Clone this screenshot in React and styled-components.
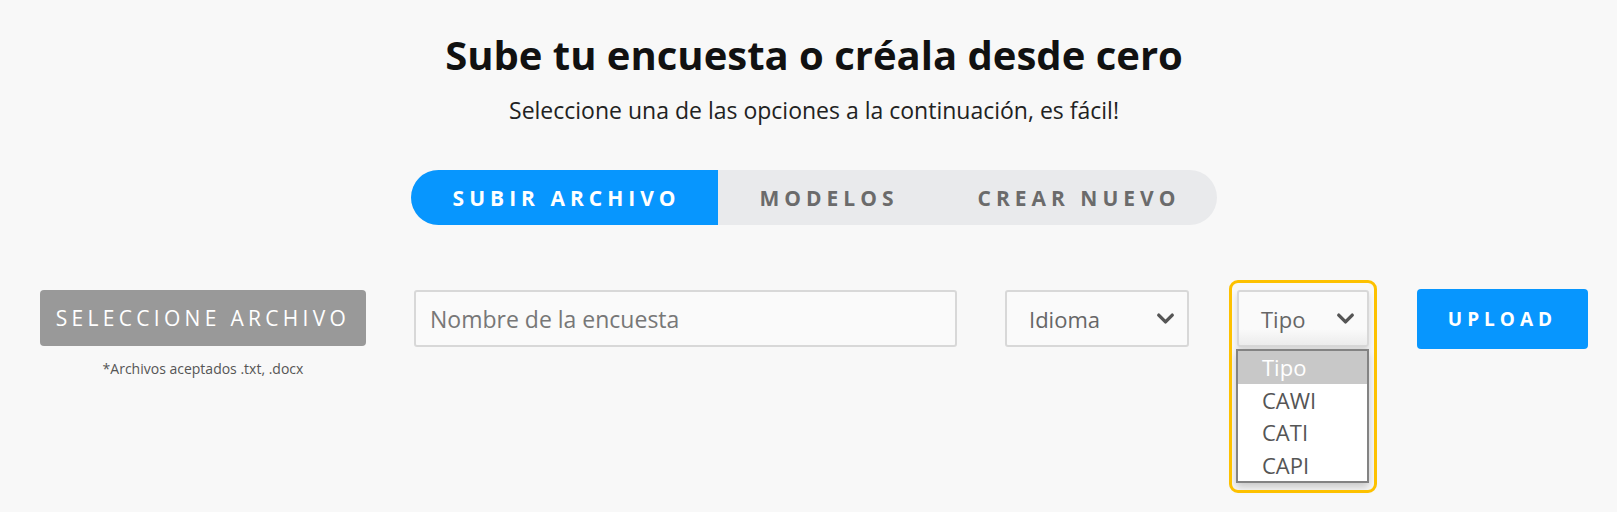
import React from "react";
import styled, { createGlobalStyle } from "styled-components";
import { ChevronDown } from "lucide-react";

const GlobalStyle = createGlobalStyle`
  body {
    margin: 0;
    background: #f8f8f8;
    font-family: "Open Sans", "Noto Sans", sans-serif;
  }
`;

const Page = styled.div`
  display: flex;
  flex-direction: column;
  align-items: center;
  padding: 30px 0 0 11px;
  min-height: 512px;
  box-sizing: border-box;
`;

const Title = styled.h1`
  margin: 0;
  font-size: 40px;
  line-height: 50px;
  font-weight: 700;
  color: #111;
  font-stretch: 92%;
`;

const Subtitle = styled.p`
  margin: 15px 0 0;
  font-size: 23px;
  line-height: 30px;
  color: #222;
  font-stretch: 92%;
`;

const Tabs = styled.div`
  display: flex;
  margin-top: 45px;
  height: 55px;
  background: #e9eaec;
  border-radius: 28px;
  overflow: hidden;
`;

const Tab = styled.div`
  display: flex;
  align-items: center;
  padding: 0 37px 0 42px;
  font-size: 21px;
  font-weight: 700;
  font-stretch: 92%;
  letter-spacing: 5px;
  color: ${(p) => (p.$active ? "#fff" : "#6b6b6b")};
  background: ${(p) => (p.$active ? "#0796fe" : "transparent")};
`;

const Row = styled.div`
  display: flex;
  align-items: flex-start;
  gap: 48px;
  margin-top: 65px;
`;

const FileCol = styled.div`
  display: flex;
  flex-direction: column;
  align-items: center;
`;

const GrayButton = styled.div`
  width: 326px;
  height: 56px;
  display: flex;
  align-items: center;
  justify-content: center;
  background: #999;
  border-radius: 4px;
  color: #fff;
  font-size: 21px;
  letter-spacing: 4.3px;
`;

const Note = styled.div`
  margin-top: 13px;
  font-size: 14px;
  color: #555;
`;

const TextInput = styled.div`
  width: 543px;
  height: 57px;
  box-sizing: border-box;
  display: flex;
  align-items: center;
  padding: 0 14px;
  background: #fafafa;
  border: 2px solid #d8d8d8;
  border-radius: 3px;
  font-size: 23px;
  color: #777;
`;

const Select = styled.div`
  width: ${(p) => p.$width}px;
  height: 57px;
  box-sizing: border-box;
  display: flex;
  align-items: center;
  justify-content: space-between;
  padding: 0 8px 0 22px;
  background: ${(p) =>
    p.$open ? "linear-gradient(#fafafa 70%, #ececec)" : "#fafafa"};
  border: 2px solid #d8d8d8;
  border-radius: 3px;
  font-size: 22px;
  color: #666;
  box-shadow: ${(p) => (p.$open ? "0 4px 6px rgba(0,0,0,0.12)" : "none")};
`;

const SelectWrap = styled.div`
  position: relative;
`;

const Highlight = styled.div`
  position: absolute;
  top: -10px;
  left: -8px;
  width: 148px;
  height: 213px;
  box-sizing: border-box;
  border: 3px solid #fdc100;
  border-radius: 9px;
  pointer-events: none;
`;

const Dropdown = styled.ul`
  position: absolute;
  top: 59px;
  left: -1px;
  width: 133px;
  margin: 0;
  padding: 0;
  list-style: none;
  box-sizing: border-box;
  border: 2px solid #838383;
  background: #fff;
  box-shadow: 0 4px 8px rgba(0, 0, 0, 0.2);
`;

const Option = styled.li`
  height: 32.5px;
  display: flex;
  align-items: center;
  padding-left: 24px;
  font-size: 22px;
  color: ${(p) => (p.$selected ? "#fff" : "#555")};
  background: ${(p) => (p.$selected ? "#c8c8c8" : "transparent")};
`;

const UploadButton = styled.div`
  width: 171px;
  height: 60px;
  margin-top: -1px;
  display: flex;
  align-items: center;
  justify-content: center;
  background: #0796fe;
  border-radius: 4px;
  color: #fff;
  font-size: 19px;
  font-weight: 700;
  letter-spacing: 5px;
`;

const Chevron = () => <ChevronDown size={27} strokeWidth={3} color="#555" />;

export default function App() {
  const tipos = ["Tipo", "CAWI", "CATI", "CAPI"];
  return (
    <>
      <GlobalStyle />
      <Page>
        <Title>Sube tu encuesta o créala desde cero</Title>
        <Subtitle>Seleccione una de las opciones a la continuación, es fácil!</Subtitle>
        <Tabs>
          <Tab $active>SUBIR ARCHIVO</Tab>
          <Tab>MODELOS</Tab>
          <Tab>CREAR NUEVO</Tab>
        </Tabs>
        <Row>
          <FileCol>
            <GrayButton>SELECCIONE ARCHIVO</GrayButton>
            <Note>*Archivos aceptados .txt, .docx</Note>
          </FileCol>
          <TextInput>Nombre de la encuesta</TextInput>
          <Select $width={184}>
            Idioma
            <Chevron />
          </Select>
          <SelectWrap>
            <Select $width={132} $open>
              Tipo
              <Chevron />
            </Select>
            <Dropdown>
              {tipos.map((t, i) => (
                <Option key={t} $selected={i === 0}>
                  {t}
                </Option>
              ))}
            </Dropdown>
            <Highlight />
          </SelectWrap>
          <UploadButton>UPLOAD</UploadButton>
        </Row>
      </Page>
    </>
  );
}
